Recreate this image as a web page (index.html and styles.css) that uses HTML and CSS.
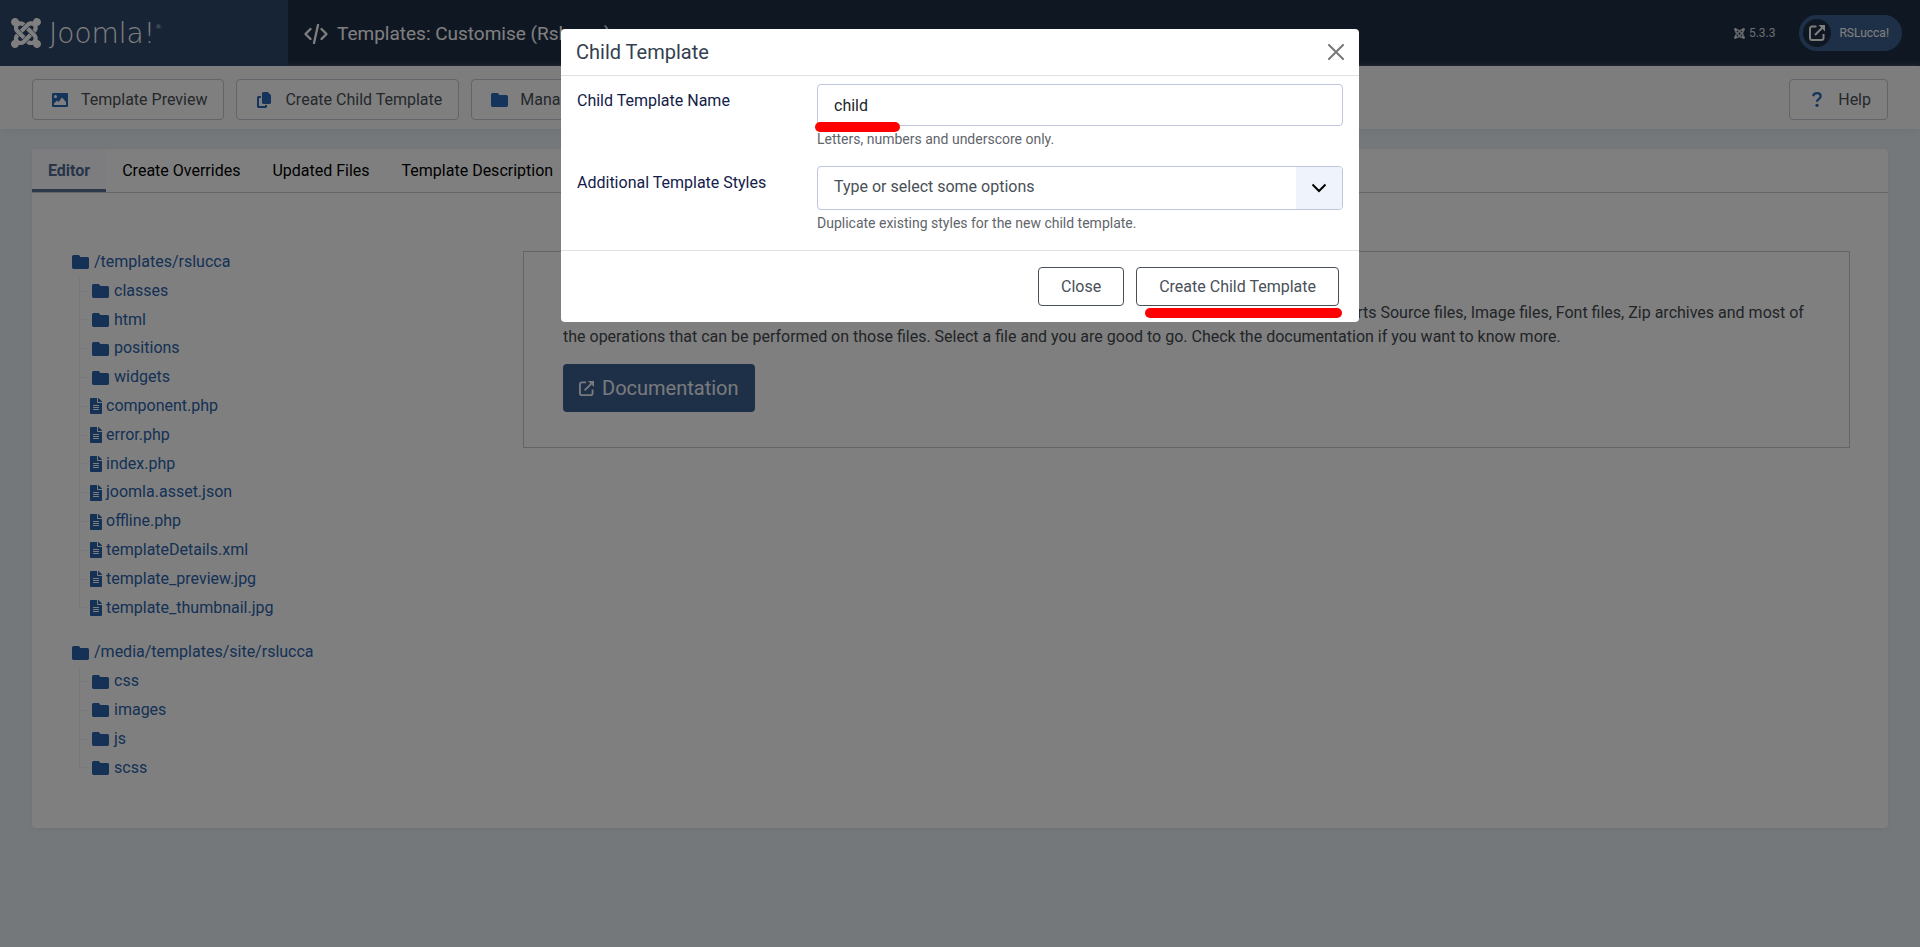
FILE: index.html
```html
<!DOCTYPE html>
<html lang="en">
<head>
<meta charset="utf-8">
<title>Templates: Customise (Rslucca)</title>
<link rel="stylesheet" href="styles.css">
</head>
<body>
<svg class="sprite" aria-hidden="true">
  <symbol id="joomla" viewBox="0 32 448 448"><path d="M.6 92.1C.6 58.8 27.4 32 60.4 32c30 0 54.5 21.9 59.2 50.2 32.6-7.6 67.1.6 96.5 30l-44.3 44.3c-20.5-20.5-42.6-16.3-55.4-3.5-14.3 14.3-14.3 37.9 0 52.2l99.5 99.5-44 44.3c-87.7-87.2-49.7-49.7-99.8-99.7-26.8-26.5-35-64.8-24.8-98.9C20.4 144.6.6 120.7.6 92.1zm129.5 116.4l44.3 44.3c10-10 89.7-89.7 99.7-99.8 14.3-14.3 37.6-14.3 51.9 0 12.8 12.8 17 35-3.5 55.4l44 44.3c31.2-31.2 38.5-67.6 28.9-101.2 29.2-4.1 51.9-29.2 51.9-59.5 0-33.2-26.8-60.1-59.8-60.1-30.3 0-55.4 22.5-59.5 51.6-33.8-9.9-71.7-1.5-98.3 25.1-18.3 19.1-71.1 71.5-99.6 99.9zm266.3 152.2c8.2-32.7-.9-68.5-26.3-93.9-11.8-12.2 5 4.7-99.5-99.7l-44.3 44.3 99.7 99.7c14.3 14.3 14.3 37.6 0 51.9-12.8 12.8-35 17-55.4-3.5l-44 44.3c27.6 30.2 68 38.8 102.7 28 5.5 27.4 29.7 48.1 58.9 48.1 33 0 59.8-26.8 59.8-60.1 0-30.2-22.5-55-51.6-59.1zm-84.3-53.1l-44-44.3c-87 86.4-50.4 50.4-99.7 99.8-14.3 14.3-37.6 14.3-51.9 0-13.1-13.4-16.9-35.3 3.2-55.4l-44-44.3c-30.2 30.2-38 65.2-29.5 98.3-26.7 6-46.2 29.9-46.2 58.2C0 453.2 26.8 480 59.8 480c28.6 0 52.5-19.8 58.6-46.7 32.7 8.2 68.5-.6 94.2-26 32.1-32 12.2-12.4 99.5-99.7z"/></symbol>
  <symbol id="folder" viewBox="0 64 512 384" preserveAspectRatio="none"><path d="M464 118H252l-44-54H48C21.500 64 0 85.500 0 112v288c0 26.500 21.500 48 48 48h416c26.500 0 48-21.500 48-48V166c0-26.500-21.500-48-48-48z"/></symbol>
  <symbol id="file" viewBox="0 0 384 512"><path d="M224 136V0H24C10.700 0 0 10.700 0 24v464c0 13.300 10.700 24 24 24h336c13.300 0 24-10.700 24-24V160H248c-13.200 0-24-10.800-24-24zm64 236c0 6.600-5.400 12-12 12H108c-6.600 0-12-5.400-12-12v-8c0-6.600 5.400-12 12-12h168c6.600 0 12 5.400 12 12v8zm0-64c0 6.600-5.400 12-12 12H108c-6.600 0-12-5.400-12-12v-8c0-6.600 5.400-12 12-12h168c6.600 0 12 5.400 12 12v8zm0-72v8c0 6.600-5.400 12-12 12H108c-6.600 0-12-5.400-12-12v-8c0-6.600 5.400-12 12-12h168c6.600 0 12 5.400 12 12zm96-114.100v6.100H256V0h6.100c6.400 0 12.500 2.500 17 7l97.900 98c4.500 4.500 7 10.600 7 16.900z"/></symbol>
  <symbol id="image" viewBox="0 0 16 14"><path fill-rule="evenodd" d="M1 0h14a1 1 0 0 1 1 1v12a1 1 0 0 1-1 1H1a1 1 0 0 1-1-1V1a1 1 0 0 1 1-1zM3.500 2a1.500 1.500 0 1 0 0 3 1.500 1.500 0 0 0 0-3zM2 12h12V9l-4-4.500L6.500 9 5 7.500 2 10.500z"/></symbol>
  <symbol id="copy" viewBox="0 0 16 16"><path d="M7.500 0h4.300L15 3.200v7.300c0 .8-.7 1.500-1.500 1.500h-6C6.700 12 6 11.300 6 10.500v-9C6 .7 6.700 0 7.500 0zM2.500 4H5v2H3v8h6v-1h2v1.500c0 .8-.7 1.500-1.500 1.500h-7C1.700 16 1 15.300 1 14.500v-9C1 4.700 1.700 4 2.500 4z"/></symbol>
  <symbol id="external" viewBox="0 0 16 16"><path d="M7.500 1.500H3A2 2 0 0 0 1 3.500V13a2 2 0 0 0 2 2h9.500a2 2 0 0 0 2-2V9M6 10l7-7" fill="none" stroke="currentColor" stroke-width="2"/><path d="M9.500 0H16v6.500z"/></symbol>
  <symbol id="code" viewBox="0 0 24 20"><path d="M6.500 5 1.500 10l5 5M17.500 5l5 5-5 5M14 1l-4 18" fill="none" stroke="currentColor" stroke-width="2.300" stroke-linecap="round" stroke-linejoin="round"/></symbol>
  <symbol id="question" viewBox="0 0 10 15"><path d="M1.200 4.200C1.500 2.300 3 1.200 5 1.200c2.200 0 3.700 1.200 3.700 3.100C8.700 7 5 6.800 5 9.800" fill="none" stroke="currentColor" stroke-width="2.300"/><circle cx="5" cy="13.300" r="1.600"/></symbol>
</svg>

<header class="header">
  <a class="brand" href="#">
    <svg class="brand-mark"><use href="#joomla"/></svg>
    <span class="brand-name">Joomla!<sup>®</sup></span>
  </a>
  <h1 class="page-title"><svg class="code-icon"><use href="#code"/></svg>Templates: Customise (Rslucca)</h1>
  <div class="status">
    <span class="version"><svg><use href="#joomla"/></svg>5.3.3</span>
    <a class="site-link" href="#"><span class="site-icon"><svg><use href="#external"/></svg></span>RSLucca!</a>
  </div>
</header>

<div class="toolbar">
  <button class="tool" type="button"><span class="tool-icon"><svg width="16" height="14"><use href="#image"/></svg></span>Template Preview</button>
  <button class="tool" type="button"><span class="tool-icon"><svg width="16" height="16"><use href="#copy"/></svg></span>Create Child Template</button>
  <button class="tool" type="button"><span class="tool-icon"><svg width="17" height="14"><use href="#folder"/></svg></span>Manage Folders</button>
  <button class="tool tool-help" type="button"><span class="tool-icon"><svg width="10" height="15"><use href="#question"/></svg></span>Help</button>
</div>

<main class="card">
  <nav class="tabs">
    <button class="tab active" type="button">Editor</button>
    <button class="tab" type="button">Create Overrides</button>
    <button class="tab" type="button">Updated Files</button>
    <button class="tab" type="button">Template Description</button>
  </nav>
  <div class="editor">
    <div class="trees">
      <div class="tree">
        <a class="folder" href="#"><svg><use href="#folder"/></svg>/templates/rslucca</a>
        <ul>
          <li><a class="folder" href="#"><svg><use href="#folder"/></svg>classes</a></li>
          <li><a class="folder" href="#"><svg><use href="#folder"/></svg>html</a></li>
          <li><a class="folder" href="#"><svg><use href="#folder"/></svg>positions</a></li>
          <li><a class="folder" href="#"><svg><use href="#folder"/></svg>widgets</a></li>
          <li><a class="file" href="#"><svg><use href="#file"/></svg>component.php</a></li>
          <li><a class="file" href="#"><svg><use href="#file"/></svg>error.php</a></li>
          <li><a class="file" href="#"><svg><use href="#file"/></svg>index.php</a></li>
          <li><a class="file" href="#"><svg><use href="#file"/></svg>joomla.asset.json</a></li>
          <li><a class="file" href="#"><svg><use href="#file"/></svg>offline.php</a></li>
          <li><a class="file" href="#"><svg><use href="#file"/></svg>templateDetails.xml</a></li>
          <li><a class="file" href="#"><svg><use href="#file"/></svg>template_preview.jpg</a></li>
          <li><a class="file" href="#"><svg><use href="#file"/></svg>template_thumbnail.jpg</a></li>
        </ul>
      </div>
      <div class="tree">
        <a class="folder" href="#"><svg><use href="#folder"/></svg>/media/templates/site/rslucca</a>
        <ul>
          <li><a class="folder" href="#"><svg><use href="#folder"/></svg>css</a></li>
          <li><a class="folder" href="#"><svg><use href="#folder"/></svg>images</a></li>
          <li><a class="folder" href="#"><svg><use href="#folder"/></svg>js</a></li>
          <li><a class="folder" href="#"><svg><use href="#folder"/></svg>scss</a></li>
        </ul>
      </div>
    </div>
    <section class="intro">
      <p>There are many features in this Template Manager to make it easy for you to customise your templates. It supports Source files, Image files, Font files, Zip archives and most of the operations that can be performed on those files. Select a file and you are good to go. Check the documentation if you want to know more.</p>
      <a class="doc-button" href="#"><svg><use href="#external"/></svg>Documentation</a>
    </section>
  </div>
</main>

<div class="backdrop">
  <div class="modal" role="dialog" aria-labelledby="modal-title">
    <div class="modal-header">
      <h2 id="modal-title">Child Template</h2>
      <button class="modal-close" type="button" aria-label="Close dialog"><svg viewBox="0 0 16 16"><path d="M1 1l14 14M15 1L1 15" fill="none" stroke="currentColor" stroke-width="2" stroke-linecap="round"/></svg></button>
    </div>
    <form class="modal-body">
      <div class="field">
        <label for="child-name">Child Template Name</label>
        <div class="control">
          <div class="input-wrap"><input id="child-name" type="text" value="child"><span class="marker marker-input"></span></div>
          <small>Letters, numbers and underscore only.</small>
        </div>
      </div>
      <div class="field">
        <label for="styles">Additional Template Styles</label>
        <div class="control">
          <div class="input-wrap">
            <select id="styles"><option>Type or select some options</option></select>
            <span class="arrow"><svg viewBox="0 0 16 10"><path d="M1.500 1.500 8 8l6.500-6.500" fill="none" stroke="currentColor" stroke-width="2"/></svg></span>
          </div>
          <small>Duplicate existing styles for the new child template.</small>
        </div>
      </div>
    </form>
    <div class="modal-footer">
      <button class="outline" type="button">Close</button>
      <button class="outline" type="button">Create Child Template</button>
      <span class="marker marker-create"></span>
    </div>
  </div>
</div>
</body>
</html>
```

FILE: styles.css
```css
* { box-sizing: border-box; }

body {
  margin: 0;
  min-height: 100vh;
  background: #ebf1f5;
  color: #22262a;
  font: 16px/24px Roboto, "Liberation Sans", sans-serif;
}

a { text-decoration: none; }
button, input, select { font: inherit; }
svg { display: block; fill: currentColor; flex: none; }
.sprite { position: absolute; width: 0; height: 0; }

/* Header */
.header {
  display: flex;
  height: 66px;
  background: #1f2f46;
  color: #fff;
}
.brand {
  display: flex;
  align-items: center;
  gap: 8px;
  width: 288px;
  padding-left: 11px;
  background: #2f486d;
  color: #fff;
}
.brand-mark { width: 30px; height: 30px; }
.brand-name {
  padding-top: 2px;
  font-family: "DejaVu Sans", sans-serif;
  font-size: 28px;
  font-weight: 200;
}
.brand-name sup {
  font-size: 7px;
  line-height: 8px;
  vertical-align: 14px;
}
.page-title {
  display: flex;
  align-items: center;
  gap: 9px;
  margin: 0;
  padding: 2px 0 0 16px;
  font-size: 19px;
  font-weight: 400;
}
.code-icon { width: 24px; height: 20px; }
.status {
  display: flex;
  align-items: center;
  gap: 24px;
  margin-left: auto;
  padding-right: 18px;
  font-size: 12px;
}
.version { display: flex; align-items: center; gap: 4px; color: #d8dce2; }
.version svg { width: 11px; height: 11px; }
.site-link {
  display: flex;
  align-items: center;
  gap: 8px;
  height: 36px;
  padding: 0 13px 0 4px;
  border-radius: 18px;
  background: #3d6191;
  color: #fff;
}
.site-icon {
  display: grid;
  place-items: center;
  width: 28px;
  height: 28px;
  border-radius: 50%;
  background: #1f2f46;
}
.site-icon svg { width: 16px; height: 16px; }

/* Toolbar */
.toolbar {
  display: flex;
  gap: 12px;
  padding: 13px 32px 9px;
  background: #fbfbfb;
  box-shadow: 0 4px 8px #e0e7ec;
}
.tool {
  display: flex;
  align-items: center;
  gap: 10px;
  height: 41px;
  padding: 0 16px;
  border: 1px solid #c3c9d0;
  border-radius: 4px;
  background: #fff;
  color: #495057;
}
.tool-icon { display: grid; place-items: center; width: 22px; color: #2a69b8; }
.tool-help { margin-left: auto; }

/* Card and tabs */
.card {
  margin: 20px 32px 0;
  border-radius: 4px;
  background: #fff;
  box-shadow: 0 1px 4px #d8e0e5;
}
.tabs {
  display: flex;
  border-bottom: 1px solid #cfcfcf;
}
.tab {
  height: 43px;
  padding: 3px 16px 0;
  border: 0;
  border-bottom: 3px solid transparent;
  background: none;
  color: #000;
}
.tab.active {
  border-color: #5c7498;
  background: #fbfbfe;
  color: #4d6a95;
  font-weight: 700;
}

.editor {
  display: grid;
  grid-template-columns: 483px 1fr;
  align-items: start;
  padding: 55px 38px 46px 8px;
}

/* File trees */
.trees { display: grid; gap: 16px; line-height: 1.8; }
.tree { padding-left: 32px; }
.tree ul {
  margin: 0 0 0 7px;
  padding: 0;
  list-style: none;
}
.tree li {
  padding-left: 13px;
  background:
    linear-gradient(#f1f1f5, #f1f1f5) 0 0 / 1px 100% no-repeat,
    linear-gradient(#f1f1f5, #f1f1f5) 0 50% / 8px 1px no-repeat;
}
.tree li:last-child { background-size: 1px 50%, 8px 1px; }
.tree a {
  display: flex;
  align-items: center;
  color: #2a62ab;
}
.tree li .file { margin-left: -2px; }
.folder { gap: 5px; }
.folder svg { width: 17px; height: 14px; }
.file { gap: 4px; }
.file svg { width: 12px; height: 16px; }

.intro {
  margin-top: 3px;
  padding: 49px 40px 35px 39px;
  border: 1px solid #c8c8c8;
  color: #444a50;
}
.intro p { margin: 0 0 15px; }
.doc-button {
  display: inline-flex;
  align-items: center;
  gap: 8px;
  height: 48px;
  padding: 0 16px;
  border-radius: 4px;
  background: #3d608f;
  color: #f1f4fa;
  font-size: 20px;
}
.doc-button svg { width: 15px; height: 15px; }

/* Dialog */
.backdrop {
  position: fixed;
  inset: 0;
  padding-top: 29px;
  background: rgba(0, 0, 0, 0.5);
}
.modal {
  max-width: 798px;
  margin: 0 auto;
  border-radius: 4px;
  background: #fff;
}
.modal-header {
  display: flex;
  align-items: center;
  justify-content: space-between;
  height: 47px;
  padding: 0 15px;
  border-bottom: 1px solid #dee2e6;
}
.modal-header h2 {
  margin: 0;
  color: #343f50;
  font-size: 20px;
  font-weight: 400;
}
.modal-close {
  padding: 0;
  border: 0;
  background: none;
  color: #777;
}
.modal-close svg { width: 16px; height: 16px; }
.modal-body {
  display: grid;
  gap: 18px;
  padding: 8px 16px 18px;
}
.field { display: grid; grid-template-columns: 240px 1fr; }
.field label { padding-top: 5px; color: #132049; }
.input-wrap { position: relative; }
.control input, .control select {
  display: block;
  width: 100%;
  height: 42px;
  padding: 0 16px;
  border: 1px solid #bfc5dc;
  border-radius: 4px;
  background: #fff;
  color: #22262a;
  appearance: none;
}
.control select { height: 44px; padding-bottom: 2px; color: #495057; }
.arrow {
  position: absolute;
  inset: 1px 1px 1px auto;
  display: grid;
  place-items: center;
  width: 46px;
  border-radius: 0 3px 3px 0;
  background: #eff3fb;
  color: #000;
  pointer-events: none;
}
.arrow svg { width: 16px; height: 10px; }
.control small {
  display: block;
  margin-top: 4px;
  color: #5f656b;
  font-size: 14px;
  line-height: 18px;
}
.modal-footer {
  position: relative;
  display: flex;
  justify-content: flex-end;
  gap: 12px;
  padding: 16px 20px;
  border-top: 1px solid #dee2e6;
}
.outline {
  height: 39px;
  padding: 0 22px;
  border: 1px solid #495057;
  border-radius: 4px;
  background: #fff;
  color: #495057;
}

/* Highlight strokes */
.marker {
  position: absolute;
  height: 10px;
  border-radius: 5px;
  background: #f00;
}
.marker-input { left: -2px; bottom: -6px; width: 85px; }
.marker-create { right: 17px; bottom: 4px; width: 197px; }
```
